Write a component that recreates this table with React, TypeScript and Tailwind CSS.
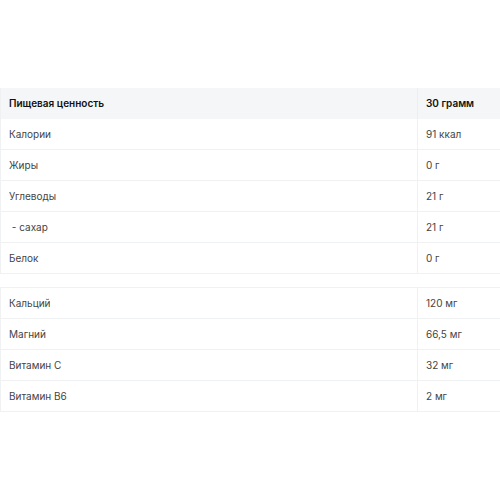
const main = [
  ["Калории", "91 ккал"],
  ["Жиры", "0 г"],
  ["Углеводы", "21 г"],
  [" - сахар", "21 г"],
  ["Белок", "0 г"],
];

const minerals = [
  ["Кальций", "120 мг"],
  ["Магний", "66,5 мг"],
  ["Витамин C", "32 мг"],
  ["Витамин B6", "2 мг"],
];

function Row({ name, value }: { name: string; value: string }) {
  return (
    <div className="flex h-[31px] border-b border-[#f0f1f2] text-[#444]">
      <div className="flex-1 flex items-center pl-2 whitespace-pre">{name}</div>
      <div className="w-[83px] flex items-center pl-2 border-l border-[#f0f1f2]">{value}</div>
    </div>
  );
}

export default function App() {
  return (
    <div className="w-[500px] h-[500px] bg-white pt-[88px] text-[10px]" style={{ fontFamily: "Inter, 'Noto Sans', sans-serif" }}>
      <div className="border-l border-[#f0f1f2]">
        <div className="flex h-[31px] bg-[#f5f6f7] font-semibold text-[#111]">
          <div className="flex-1 flex items-center pl-2">Пищевая ценность</div>
          <div className="w-[83px] flex items-center pl-2 border-l border-[#eceeef]">30 грамм</div>
        </div>
        {main.map((r, i) => (
          <Row key={i} name={r[0]} value={r[1]} />
        ))}
      </div>
      <div className="h-[13px]" />
      <div className="border-l border-t border-[#f0f1f2]">
        {minerals.map((r, i) => (
          <Row key={i} name={r[0]} value={r[1]} />
        ))}
      </div>
    </div>
  );
}
